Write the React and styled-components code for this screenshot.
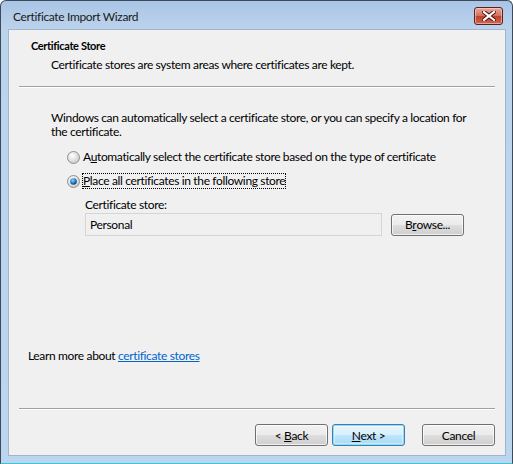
import React from 'react'
import styled, { createGlobalStyle, css } from 'styled-components'

const Global = createGlobalStyle`
  html, body { margin: 0; padding: 0; background: #fff; }
  body {
    font-family: Lato, "Liberation Sans", sans-serif;
    font-size: 12px;
    letter-spacing: -0.35px;
    color: #000;
  }
`

function Radio({ checked }) {
  return (
    <RadioDot viewBox="0 0 13 13" width="13" height="13">
      <defs>
        <radialGradient id={checked ? 'rgOn' : 'rgOff'} cx="0.4" cy="0.35" r="0.7">
          <stop offset="0" stopColor="#ffffff" />
          <stop offset="1" stopColor="#c8c8c8" />
        </radialGradient>
        <radialGradient id="dot" cx="0.4" cy="0.35" r="0.7">
          <stop offset="0" stopColor="#8fd6ff" />
          <stop offset="0.6" stopColor="#1c73c4" />
          <stop offset="1" stopColor="#0b3c7a" />
        </radialGradient>
      </defs>
      <circle cx="6.5" cy="6.5" r="6" fill={`url(#${checked ? 'rgOn' : 'rgOff'})`} stroke="#8e8f8f" strokeWidth="1" />
      {checked && <circle cx="6.5" cy="6.5" r="3.3" fill="url(#dot)" />}
    </RadioDot>
  )
}

function App() {
  return (
    <>
      <Global />
      <Window>
        <TitleBar>
          <Title>Certificate Import Wizard</Title>
          <CloseBtn>
            <svg width="14" height="10" viewBox="0 0 14 10">
              <path d="M2 1 L12 9 M12 1 L2 9" stroke="#4a1010" strokeWidth="4" strokeLinecap="square" />
              <path d="M2 1 L12 9 M12 1 L2 9" stroke="#ffffff" strokeWidth="2.2" strokeLinecap="square" />
            </svg>
          </CloseBtn>
        </TitleBar>
        <Client>
          <Header>
            <HeaderTitle>Certificate Store</HeaderTitle>
            <HeaderSub>Certificate stores are system areas where certificates are kept.</HeaderSub>
          </Header>
          <Rule />
          <Body>
            <Para>
              Windows can automatically select a certificate store, or you can specify a location for
              <br />
              the certificate.
            </Para>
            <Options>
              <Option>
                <Radio />
                <span>A<u>u</u>tomatically select the certificate store based on the type of certificate</span>
              </Option>
              <Option>
                <Radio checked />
                <Focus><u>P</u>lace all certificates in the following store</Focus>
              </Option>
            </Options>
            <StoreBlock>
              <FieldLabel>Certificate store:</FieldLabel>
              <FieldRow>
                <TextBox>Personal</TextBox>
                <Button>B<u>r</u>owse...</Button>
              </FieldRow>
            </StoreBlock>
          </Body>
          <LearnMore>
            Learn more about <Link>certificate stores</Link>
          </LearnMore>
          <Rule />
          <Footer>
            <Button>{'< '}<u>B</u>ack</Button>
            <Button primary><u>N</u>ext{' >'}</Button>
            <Gap />
            <Button>Cancel</Button>
          </Footer>
        </Client>
      </Window>
    </>
  )
}

export default App

const Window = styled.div`
  position: relative;
  width: 513px;
  height: 464px;
  box-sizing: border-box;
  border: 1px solid #3d4a58;
  border-bottom-color: #38c6d6;
  border-radius: 6px 6px 0 0;
  background: linear-gradient(to bottom, #a9c5e6 0px, #bcd3ec 28px, #bcd6ef 100%);
  display: flex;
  flex-direction: column;
  overflow: hidden;
`

const TitleBar = styled.div`
  height: 28px;
  display: flex;
  align-items: center;
  justify-content: space-between;
  padding: 0 9px 0 12px;
`

const Title = styled.div`
  font-size: 12px;
  color: #1a1a1a;
  margin-top: 3px;
`

const CloseBtn = styled.div`
  width: 27px;
  height: 16px;
  margin-top: 1px;
  border: 1px solid #5b1e24;
  border-radius: 3px;
  background: linear-gradient(to bottom, #e9a99b 0%, #d4705d 48%, #c0402b 52%, #cc6a50 100%);
  box-shadow: inset 0 0 0 1px rgba(255, 220, 210, 0.55);
  display: flex;
  align-items: center;
  justify-content: center;
`

const Client = styled.div`
  flex: 1;
  margin: 0 6px 7px 7px;
  background: #f0f0f0;
  border: 1px solid #9fb6cf;
  display: flex;
  flex-direction: column;
  padding: 0 10px 0 10px;
`

const Header = styled.div`
  padding: 9px 0 0 12px;
  height: 56px;
  box-sizing: border-box;
`

const HeaderTitle = styled.div`
  font-weight: 700;
  font-size: 11px;
  line-height: 14px;
`

const HeaderSub = styled.div`
  margin: 4px 0 0 20px;
  line-height: 15px;
`

const Rule = styled.div`
  height: 1px;
  background: #a0a0a0;
  border-bottom: 1px solid #ffffff;
`

const Body = styled.div`
  padding: 23px 0 0 32px;
`

const Para = styled.div`
  line-height: 14px;
  white-space: nowrap;
`

const Options = styled.div`
  margin: 11px 0 0 16px;
  display: flex;
  flex-direction: column;
  gap: 10px;
`

const Option = styled.div`
  display: flex;
  align-items: center;
  gap: 3px;
  line-height: 14px;
`

const RadioDot = styled.svg`
  flex: none;
`

const Focus = styled.span`
  outline: 1px dotted #000;
  outline-offset: 0;
`

const StoreBlock = styled.div`
  margin: 10px 0 0 34px;
`

const FieldLabel = styled.div`
  line-height: 14px;
`

const FieldRow = styled.div`
  margin-top: 1px;
  display: flex;
  align-items: center;
  gap: 9px;
`

const TextBox = styled.div`
  width: 297px;
  height: 23px;
  box-sizing: border-box;
  border: 1px solid #d5d5d5;
  background: #f0f0f0;
  padding: 3px 0 0 4px;
`

const Button = styled.div`
  width: 73px;
  height: 22px;
  box-sizing: border-box;
  border: 1px solid #707070;
  border-radius: 3px;
  display: flex;
  align-items: center;
  justify-content: center;
  white-space: pre;
  background: linear-gradient(to bottom, #f2f2f2 0%, #ebebeb 48%, #dddddd 52%, #cfcfcf 100%);
  box-shadow: inset 0 0 0 1px rgba(255, 255, 255, 0.7);
  ${p => p.primary && css`
    border-color: #3c7fb1;
    background: linear-gradient(to bottom, #eaf6fd 0%, #d9f0fc 48%, #bee6fd 52%, #a7d9f5 100%);
    box-shadow: inset 0 0 0 1px #8fdcf7, inset 0 0 0 2px rgba(255,255,255,0.4);
  `}
`

const LearnMore = styled.div`
  margin-top: auto;
  padding: 0 0 45px 9px;
  line-height: 14px;
`

const Link = styled.span`
  color: #0066cc;
  text-decoration: underline;
`

const Footer = styled.div`
  display: flex;
  justify-content: flex-end;
  gap: 4px;
  padding: 14px 0 9px 0;
`

const Gap = styled.div`
  width: 9px;
`
